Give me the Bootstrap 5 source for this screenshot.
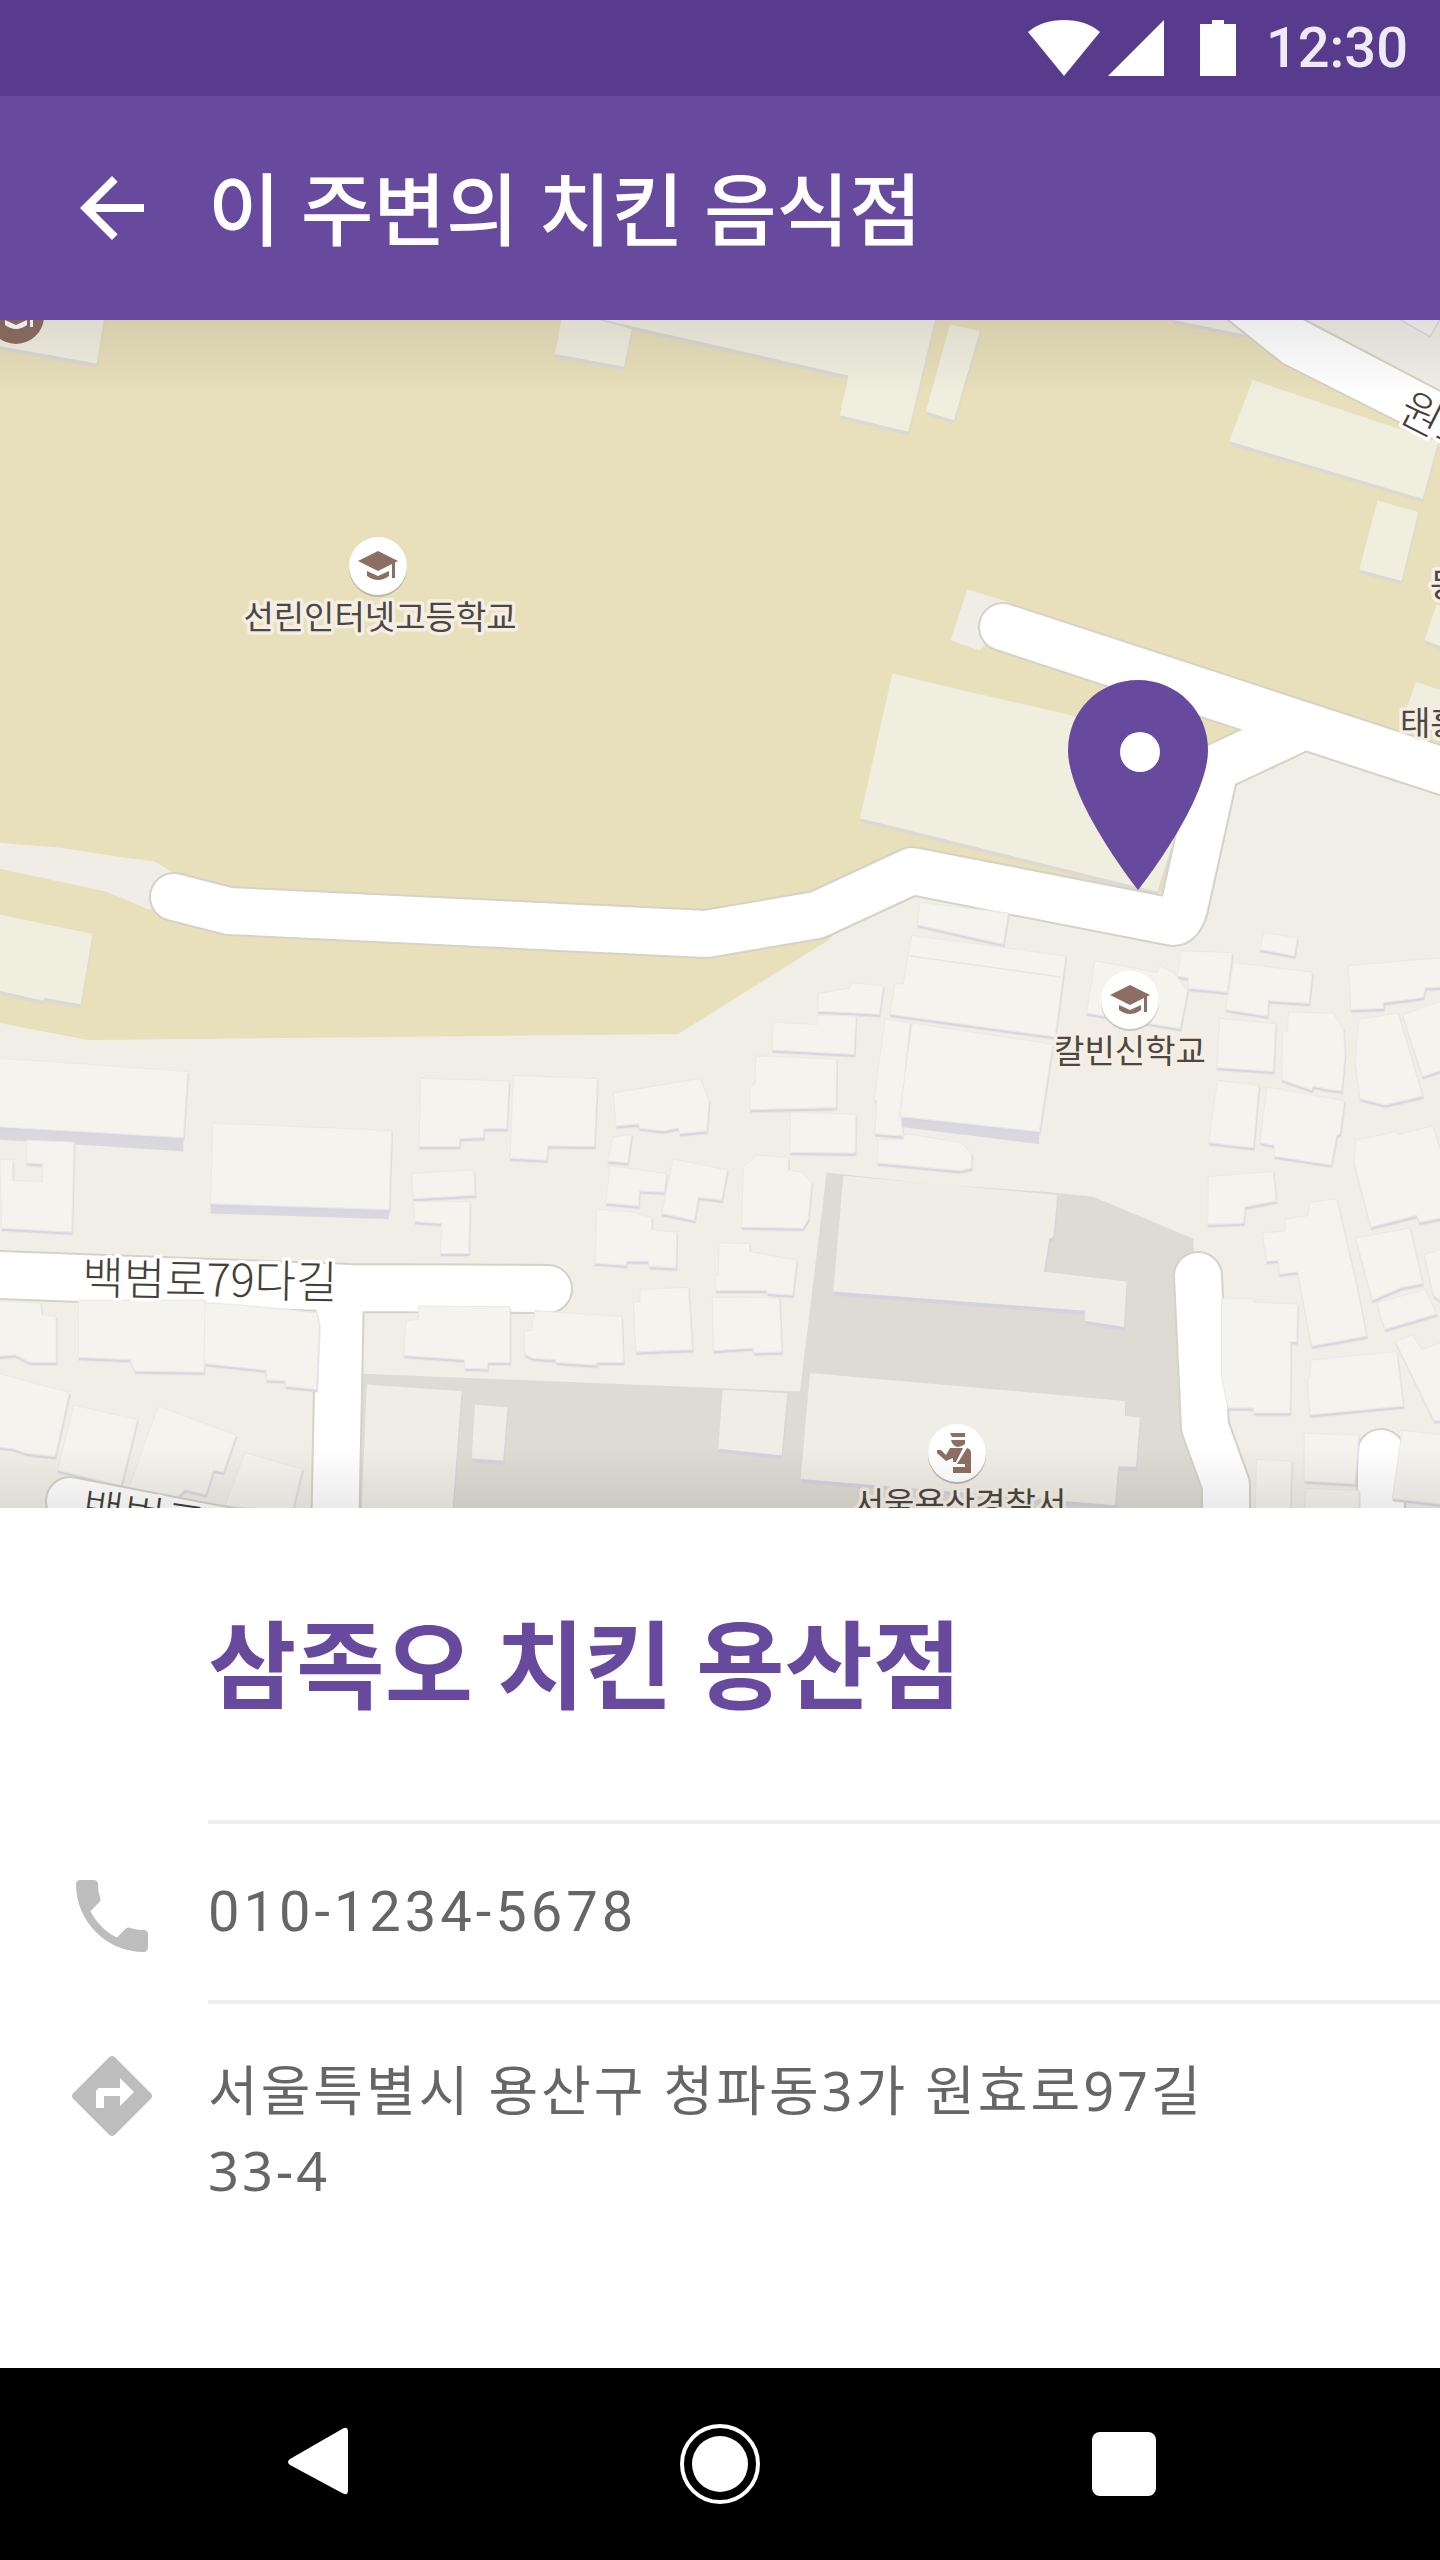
<!DOCTYPE html>
<html lang="ko">
<head>
<meta charset="utf-8">
<meta name="viewport" content="width=device-width, initial-scale=1">
<title>이 주변의 치킨 음식점</title>
<link href="https://cdn.jsdelivr.net/npm/bootstrap@5.3.0/dist/css/bootstrap.min.css" rel="stylesheet">
<style>
  :root { --brand: #674a9e; --brand-dark: #583b8d; --inset: 208px; }
  body { font-family: Roboto, "Noto Sans CJK KR", sans-serif; background: #fff; }
  .status-bar { height: 96px; padding: 0 32px; background: var(--brand-dark); color: #efebf5; }
  .status-bar time { font-size: 56px; line-height: 64px; font-weight: 500; }
  .app-bar { height: 224px; padding: 0 64px; background: var(--brand); }
  .app-title { font-family: Lato, "Noto Sans CJK KR", sans-serif; font-size: 79px; line-height: 112px; font-weight: 500; padding-top: 4px; }
  .icon-btn { width: 96px; height: 96px; }
  .icon-btn svg, .row-icon { width: 96px; height: 96px; display: block; }
  .title-gap { gap: 48px; }
  .map-view text { font-family: "Noto Sans CJK KR", sans-serif; fill: #4a4843; paint-order: stroke; stroke: #f6eee3; stroke-width: 7px; stroke-linejoin: round; font-size: 33px; }
  .map-view .road-name { font-size: 45px; font-weight: 300; stroke: #fff; fill: #453f3a; }
  .casing { fill: none; stroke: #d6d2c5; stroke-width: 50; stroke-linecap: round; stroke-linejoin: round; }
  .lane { fill: none; stroke: #fff; stroke-width: 46; stroke-linecap: round; stroke-linejoin: round; }
  .yard-house { fill: #f0eedf; filter: drop-shadow(1px 10px 0 #dbd9d4); }
  .house { fill: #f4f3ee; stroke: #ebe9e5; stroke-width: 3; filter: drop-shadow(2px 6px 0 #d6d6e0); }
  .police-house { fill: #eeeee6; filter: drop-shadow(2px 10px 0 #d3d2df); }
  .wall { fill: #d9d8de; }
  .place-name { padding: 84px 0 84px var(--inset); }
  .place-name h2 { font-family: Lato, "Noto Sans CJK KR", sans-serif; font-size: 96px; line-height: 144px; font-weight: 700; color: var(--brand); }
  .contact-row { padding-left: 64px; gap: 48px; }
  .contact-text { border-top: 4px solid #eee; font-size: 56px; line-height: 80px; letter-spacing: 4px; color: #666; }
  .contact-text a { color: inherit; text-decoration: none; }
  .phone-text { padding: 48px 0; }
  .address-text { padding: 46px 200px 48px 0; font-family: "Noto Sans", "Noto Sans CJK KR", sans-serif; font-size: 54px; letter-spacing: 3px; }
  .row-icon { margin-top: 48px; fill: #bdbdbd; }
  .system-nav { height: 192px; gap: 308px; background: #000; }
</style>
</head>
<body class="d-flex flex-column min-vh-100">
<header>
  <div class="status-bar d-flex align-items-center justify-content-end">
    <svg width="210" height="56" viewBox="1028 20 210 56" fill="#fff" aria-hidden="true">
      <path d="M1028 32Q1042 20 1064 20T1100 32L1064 76Z"/>
      <path d="M1164 20V76H1108Z"/>
      <path d="M1212 20h12v4h12v52h-36V24h12z"/>
    </svg>
    <time class="ms-4 ps-1">12:30</time>
  </div>
  <nav class="app-bar d-flex align-items-center title-gap">
    <button type="button" class="icon-btn btn p-0 border-0" aria-label="뒤로">
      <svg viewBox="0 0 24 24" fill="#fff"><path d="M20 11H7.83l5.59-5.59L12 4l-8 8 8 8 1.41-1.41L7.83 13H20v-2z"/></svg>
    </button>
    <h1 class="app-title text-white m-0">이 주변의 치킨 음식점</h1>
  </nav>
</header>

<main class="flex-grow-1">
<section aria-label="지도">
<svg class="map-view d-block w-100" viewBox="0 320 1440 1188">
  <defs>
    <linearGradient id="shadeTop" x1="0" y1="0" x2="0" y2="1"><stop offset="0" stop-opacity=".08"/><stop offset="1" stop-opacity="0"/></linearGradient>
    <linearGradient id="shadeBottom" x1="0" y1="0" x2="0" y2="1"><stop offset="0" stop-opacity="0"/><stop offset="1" stop-opacity=".08"/></linearGradient>
    <g id="gradCap"><path d="M-20-5 0-15 20-5 0 5Z"/><path d="M-11 5 0 10 11 5V10Q0 18-11 10Z"/><path d="M14-4h3v16h-3z"/></g>
  </defs>
  <!-- land and school grounds -->
  <rect y="320" width="1440" height="1188" fill="#f1ede7"/>
  <path fill="#e8dfbb" d="M0 320H1228L1283 364 1440 444V770L1250 725 1180 895 915 862 827 941 678 1034 88 1040 0 1023Z"/>
  <g transform="translate(0 310) scale(.3333 .3827)">
    <path fill="#f0ede6" d="M0 1392 180 1405 380 1432 460 1440 520 1470 450 1568 320 1520 160 1490 0 1460Z"/>
    <path class="yard-house" d="M-50-20 320-20 290 140 0 95-50 90Z"/>
  </g>
  <g transform="translate(480 310) scale(.3333 .3827)">
    <path class="yard-house" d="M250 0 455 50 432 148 225 115ZM240 0 1105 171 1080 275 1285 318 1365 26V0ZM1338 265 1410 38 1500 55 1422 288Z"/>
  </g>
  <g transform="translate(960 310) scale(.3333 .3827)">
    <path class="yard-house" d="M-203 950 0 992 340 1060 650 1100 700 1200 640 1390 592 1520 0 1393-300 1328ZM1253 498 1375 528 1325 708 1198 678ZM1430 770 1480 780V890L1393 863ZM1368 972 1500 1010V1110L1340 1040ZM640 26 620 0 800 0 860 65Z"/>
    <path fill="#f0ede6" d="M22 730 150 765 60 890 0 872-28 862Z"/>
  </g>
  <g transform="translate(0 910) scale(.3333 .389)">
    <path class="yard-house" d="M-10 10 278 62 242 242 135 226 130 233-10 206Z"/>
  </g>
  <path fill="#f1ede7" d="M1290 310 1450 400V310Z"/>
  <path fill="#fff" stroke="#d6d2c5" stroke-width="2" d="M1215 310 1228 320 1283 364 1450 448V396L1305 320 1285 310Z"/>
  <g transform="translate(960 310) scale(.3333 .3827)">
    <path class="yard-house" d="M878 183 1435 345 1388 493 808 343Z"/>
    <path fill="#f4f3ee" stroke="#d9d9e6" stroke-width="4" d="M1310 20 1410 70 1450 10Z"/>
  </g>
  <!-- police station grounds -->
  <g transform="translate(480 910) scale(.3333 .389)">
    <path fill="#dddbd3" d="M1040 675 1360 705 1700 725 1840 737 2140 845 2145 950 2130 1345 2200 1560-365 1560-350 1192 960 1238Z"/>
    <path class="police-house" d="M1090 683 1730 732V760L1720 840 1708 845 1692 930 1940 955 1932 1072 1815 1056V1030L1060 981ZM990 1190 1935 1262V1300L1980 1305 1968 1432 1915 1430 1905 1530 962 1463ZM728 1233 922 1242 905 1402 715 1385ZM-340 1220-55 1237-83 1545-355 1545ZM-15 1272 82 1278 70 1416-25 1410Z"/>
  </g>
  <!-- roads -->
  <g class="casing">
    <path d="M174 897 229 911 706 934 817 915 912 871 1173 922Q1180 922 1184 908L1215 768 1302 727M1003 627 1440 770 1500 790M-30 1274 350 1288 548 1289M340 1290 335 1540M1198 1276 1205 1427 1226 1485V1540M1381 1453V1540"/>
  </g>
  <g class="lane">
    <path d="M174 897 229 911 706 934 817 915 912 871 1173 922Q1180 922 1184 908L1215 768 1302 727M1003 627 1440 770 1500 790M-30 1274 350 1288 548 1289M340 1290 335 1540M1198 1276 1205 1427 1226 1485V1540M1381 1453V1540"/>
  </g>
  <!-- houses -->
  <g transform="translate(0 910) scale(.3333 .389)">
    <path class="wall" d="M-10 557 550 585V620L-10 590ZM632 755 1167 770V795L632 780Z"/>
    <path class="house" d="M-10 380 563 415 550 585-10 557ZM80 592 222 597 215 828 5 818 0 640 38 642V695L128 698V653L80 650ZM638 547 1175 567 1167 770 632 755ZM1262 432 1527 440 1520 562 1452 562 1450 585 1380 587 1378 608 1257 608ZM1235 677 1422 668 1425 733 1240 742ZM1240 750 1410 750 1406 883 1322 883 1325 806 1245 801ZM-10 1005 122 1010 125 1040 168 1045V1163L90 1163 45 1143-10 1148ZM235 1003 615 1003 612 1188 405 1185 390 1156 235 1150ZM615 1010 715 1015 950 1035 958 1065 950 1232 858 1224 855 1210 800 1208 798 1183 612 1166ZM1257 1018 1530 1020V1163L1463 1163V1180L1395 1178 1393 1156 1212 1145 1218 1055 1255 1052ZM-10 1190 208 1240 165 1405 80 1397 40 1385-10 1380ZM222 1272 412 1310 363 1480 172 1440ZM475 1275 708 1350 670 1445 640 1440 617 1503 555 1490 530 1510 385 1488ZM735 1395 907 1437 875 1550 675 1530Z"/>
  </g>
  <g transform="translate(480 910) scale(.3333 .389)">
    <path class="wall" d="M1257 530 1678 570V602L1257 557Z"/>
    <path class="house" d="M100 425 352 433 343 608 203 606 200 643 90 638ZM400 470 660 433 687 490 680 568 600 575 595 560 550 568 480 561 475 550 408 555ZM400 583 455 577 443 650 383 645ZM390 657 560 678 553 725 478 722 475 761 378 753ZM580 640 742 668 725 746 655 738 643 798 545 780ZM350 770 450 775 515 790V822L590 828 588 920 508 916 505 902 440 903 437 913 345 908ZM790 660 830 630 925 637V668L965 673 995 700 985 795 968 818 785 815ZM880 288 1010 295 1015 270 1128 272 1122 371 877 360ZM1015 215 1110 200 1115 187 1210 195 1198 268 1013 260ZM828 375 1070 383 1068 508 810 513V455L825 445ZM932 520 1128 525 1125 625 930 623ZM717 855 808 857 810 878 950 900 938 990 862 986 860 978 708 978 705 940 715 938ZM697 995 898 997 905 1136 822 1138 818 1126 700 1133ZM480 975 625 970 637 1130 468 1136 460 1010 480 1005ZM165 1030 425 1045 430 1163 350 1163V1170L230 1163 225 1156 160 1153 135 1143 133 1083 155 1080ZM1195 590 1270 590 1275 575 1440 597 1475 625V663L1440 670 1192 650ZM1320-20 1585 8 1570 88 1312 38ZM1215 280 1290 290 1262 530 1270 581 1185 575 1190 490 1183 488ZM1295 65 1757 118 1725 326 1230 268 1245 190 1270 190ZM1297 290 1718 345 1678 570 1257 530Z"/>
    <path d="M1290 118 1742 172" stroke="#e6e6e4" stroke-width="4"/>
  </g>
  <g transform="translate(960 910) scale(.3333 .389)">
    <path class="house" d="M405 130 590 160 600 143 640 160 683 205 660 305 380 265ZM663 105 817 110 802 211 685 201V175L652 170ZM820 135 1057 160 1047 240 925 233 922 273 797 256ZM912 58 1012 72 1003 118 900 101ZM780 278 947 292 940 415 770 405ZM985 262 1120 265 1150 305 1155 370 1145 465 1105 461 1060 453 1055 463 965 436 968 315 983 310ZM1165 143 1450 122V198L1395 200 1390 225 1345 230 1270 238V253L1173 256ZM1198 280 1315 265 1388 478 1275 501 1200 485 1185 390ZM1328 270 1450 232V410L1388 428ZM772 438 897 450 880 611 747 598ZM920 455 1153 490 1140 575 1130 580 1113 655 943 633 942 605 900 598ZM745 685 940 672 948 748 855 763 850 805 743 808ZM1187 592 1310 570 1315 577 1418 555 1450 640V790L1378 803 1370 785 1233 815 1183 650ZM907 830 975 825V795L1045 785 1050 752 1130 742 1190 965 1220 1095 1055 1121 1013 930 958 936 955 900 920 903ZM1187 843 1350 817 1388 960 1325 970 1237 1003ZM1250 1010 1395 975 1430 1038 1275 1078ZM1393 885 1450 870V1010L1420 990ZM785 998 880 1000 882 1008 1013 1013 1010 1110 992 1110 990 1293 882 1293 880 1280 805 1280 785 1200ZM1053 1157 1310 1135 1330 1275 1050 1298 1043 1205 1050 1200ZM1307 1110 1357 1092 1387 1130 1450 1110V1313L1423 1313ZM1033 1345 1197 1350 1185 1475 1033 1468ZM1035 1487 1197 1492V1550L1035 1550ZM890 1412 995 1417 990 1550 885 1550ZM1327 1337 1450 1350V1528L1297 1513Z"/>
  </g>
  <path class="casing" d="M70 1501 230 1532"/><path class="lane" d="M70 1501 230 1532"/>
  <!-- points of interest -->
  <circle cx="16" cy="316" r="28" fill="#8d6e63"/>
  <use href="#gradCap" x="16" y="315" fill="#fff"/>
  <circle cx="378" cy="568" r="29" fill="#bdb8a4"/><circle cx="378" cy="566" r="29" fill="#fff"/>
  <use href="#gradCap" x="378" y="566" fill="#8d6e63"/>
  <circle cx="1130" cy="1002" r="29" fill="#c9c7c2"/><circle cx="1130" cy="1000" r="29" fill="#fff"/>
  <use href="#gradCap" x="1130" y="1000" fill="#8d6e63"/>
  <circle cx="957" cy="1455" r="29" fill="#bab8b1"/><circle cx="957" cy="1453" r="29" fill="#fff"/>
  <path fill="#8d6e63" d="M950 1433H965V1437H952ZM951 1440H965V1444Q961 1447 958 1447T952 1443ZM937 1450 941 1450 946 1455 950 1448H963L956 1462H953V1458L946 1461 937 1453ZM967 1448Q971 1449 971 1453V1473H953V1467H965V1464H957Z"/>
  <g text-anchor="middle">
    <text x="380" y="629">선린인터넷고등학교</text>
    <text x="1130" y="1063">칼빈신학교</text>
    <text x="960" y="1516">서울용산경찰서</text>
  </g>
  <text x="1400" y="735">태흥빌라</text>
  <text x="1430" y="597">동아</text>
  <text class="road-name" transform="translate(82 1294) rotate(1)">백범로79다길</text>
  <text class="road-name" transform="translate(80 1524) rotate(8)">백범로79길</text>
  <text class="road-name" transform="translate(1396 419) rotate(27)">원효로</text>
  <rect y="320" width="1440" height="76" fill="url(#shadeTop)"/>
  <rect y="1448" width="1440" height="60" fill="url(#shadeBottom)"/>
  <path fill="#674a9e" d="M1138 680c-39 0-70 31-70 70 0 52 70 140 70 140s70-88 70-140c0-39-31-70-70-70z"/>
  <circle cx="1140" cy="752" r="20" fill="#fff"/>
</svg>
</section>

<section>
  <div class="place-name"><h2 class="m-0">삼족오 치킨 용산점</h2></div>
  <div class="contact-row d-flex">
    <svg class="row-icon flex-shrink-0" viewBox="0 0 24 24" aria-hidden="true"><path d="M6.62 10.79c1.44 2.83 3.76 5.14 6.59 6.59l2.2-2.2c.27-.27.67-.36 1.02-.24 1.12.37 2.33.57 3.57.57.55 0 1 .45 1 1V20c0 .55-.45 1-1 1-9.39 0-17-7.61-17-17 0-.55.45-1 1-1h3.5c.55 0 1 .45 1 1 0 1.25.2 2.45.57 3.57.11.35.03.74-.25 1.02l-2.2 2.2z"/></svg>
    <div class="contact-text phone-text flex-grow-1"><a href="tel:010-1234-5678">010-1234-5678</a></div>
  </div>
  <div class="contact-row d-flex">
    <svg class="row-icon flex-shrink-0" viewBox="0 0 24 24" aria-hidden="true"><path d="M21.71 11.29l-9-9c-.39-.39-1.02-.39-1.41 0l-9 9c-.39.39-.39 1.02 0 1.41l9 9c.39.39 1.02.39 1.41 0l9-9c.39-.38.39-1.01 0-1.41zM14 14.5V12h-4v3H8v-4c0-.55.45-1 1-1h5V7.500l3.500 3.500-3.500 3.500z"/></svg>
    <address class="contact-text address-text flex-grow-1 m-0">서울특별시 용산구 청파동3가 원효로97길 33-4</address>
  </div>
</section>
</main>

<footer class="system-nav d-flex align-items-center justify-content-center">
  <button type="button" class="icon-btn btn p-0 border-0" aria-label="뒤로 가기"><svg viewBox="0 0 96 96" fill="#fff"><path d="M22 43 75 12.500Q80 10 80 16V74Q80 80 75 77.500L22 49Q18 46 22 43Z"/></svg></button>
  <button type="button" class="icon-btn btn p-0 border-0" aria-label="홈"><svg viewBox="0 0 96 96"><circle cx="48" cy="48" r="38" fill="none" stroke="#fff" stroke-width="4"/><circle cx="48" cy="48" r="28" fill="#fff"/></svg></button>
  <button type="button" class="icon-btn btn p-0 border-0" aria-label="최근 앱"><svg viewBox="0 0 96 96" fill="#fff"><rect x="16" y="16" width="64" height="64" rx="8"/></svg></button>
</footer>
<script src="https://cdn.jsdelivr.net/npm/bootstrap@5.3.0/dist/js/bootstrap.bundle.min.js"></script>
</body>
</html>
